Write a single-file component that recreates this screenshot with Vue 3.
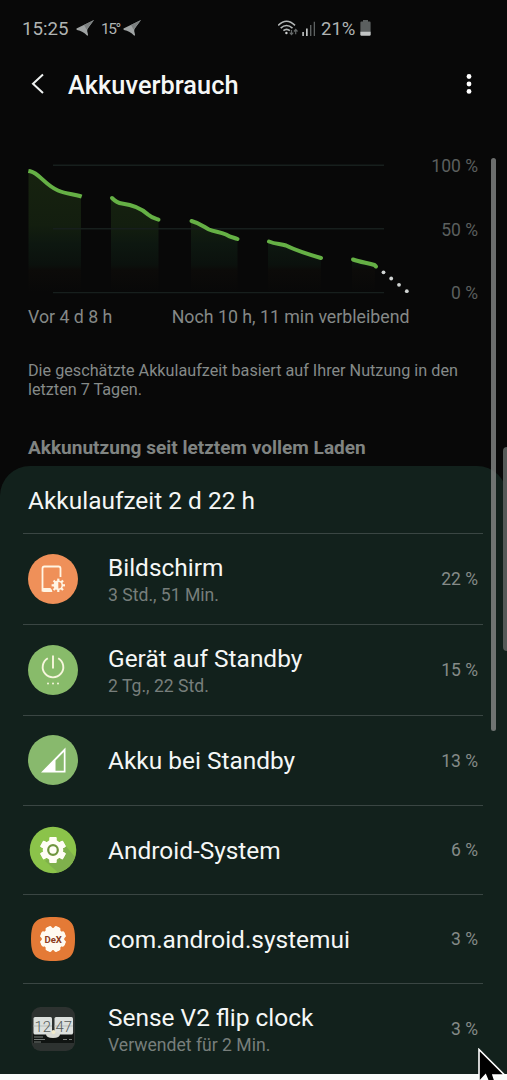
<script setup>
const rows = [
  { icon: 'screen', title: 'Bildschirm', sub: '3 Std., 51 Min.', pct: '22 %', size: 'r91' },
  { icon: 'power', title: 'Gerät auf Standby', sub: '2 Tg., 22 Std.', pct: '15 %', size: 'r91' },
  { icon: 'signal', title: 'Akku bei Standby', pct: '13 %', size: 'r90' },
  { icon: 'gear', title: 'Android-System', pct: '6 %', size: 'r89' },
  { icon: 'dex', title: 'com.android.systemui', pct: '3 %', size: 'r89' },
  { icon: 'clock', title: 'Sense V2 flip clock', sub: 'Verwendet für 2 Min.', pct: '3 %', size: 'r91' },
]
const teeth6 = [0, 60, 120, 180, 240, 300]
const teeth8 = [0, 45, 90, 135, 180, 225, 270, 315]
</script>

<template>
  <div class="phone">
    <header class="status">
      <span class="time">15:25</span>
      <svg class="plane p1" width="19" height="18" viewBox="0 0 19 18">
        <path d="M18 1 .5 9.600Q0 10.300 1 10.900Q7 12 11 16.500Q12.300 17 12 15.500Q10.500 12 11.500 10Z" fill="#a0a4a4" /><path d="M18 1 8 5.900 10.500 10.500Z" fill="#7c8080" />
      </svg>
      <span class="deg">15°</span>
      <svg class="plane p2" width="19" height="18" viewBox="0 0 19 18">
        <path d="M18 1 .5 9.600Q0 10.300 1 10.900Q7 12 11 16.500Q12.300 17 12 15.500Q10.500 12 11.500 10Z" fill="#a0a4a4" /><path d="M18 1 8 5.900 10.500 10.500Z" fill="#7c8080" />
      </svg>
      <svg class="wifi" width="21" height="17" viewBox="0 0 21 17" fill="none" stroke="#b4b8b8" stroke-width="1.600">
        <path d="M.2 5.400Q8.500-3 17 5.400M2.700 8.200Q8.500 2.800 14.500 8.200M5.400 10.700Q8.500 8 11.900 10.700" />
        <circle cx="8.400" cy="13" r="1.200" fill="#d0d3d3" stroke="none" />
        <path d="M13.500 10v4.200m-1.800-1.600 1.800 2 1.800-2M17.700 14.300V10m-1.800 1.500 1.800-2 1.800 2" stroke="#656969" stroke-width="1.200" />
      </svg>
      <svg class="bars" width="14" height="15" viewBox="0 0 14 15">
        <path d="M.3 11h1.600v4H.3zM4 7.500h1.700V15H4z" fill="#c0c4c4" /><path d="M8 4h1.400v11H8zM11.700.7H13V15h-1.300z" fill="#5d6161" />
      </svg>
      <span class="charge">21%</span>
      <svg class="batt" width="11" height="16" viewBox="0 0 11 16">
        <path d="M3 0h5v1.500h1.600q1 0 1 1V15H.4V2.500q0-1 1-1H3Z" fill="#5b5f5f" /><path d="M.4 11.700h10.200v3q0 1-1 1H1.400q-1 0-1-1Z" fill="#c2c5c5" />
      </svg>
    </header>

    <div class="appbar">
      <svg class="back" width="14" height="22" viewBox="0 0 14 22"><path d="M12 1.500 2 10.700 12 20" fill="none" stroke="#eef1f0" stroke-width="2" /></svg>
      <h1>Akkuverbrauch</h1>
      <svg class="more" width="6" height="22" viewBox="0 0 6 22" fill="#fff"><circle cx="3" cy="3.500" r="2.400" /><circle cx="3" cy="11" r="2.400" /><circle cx="3" cy="18.400" r="2.400" /></svg>
    </div>

    <section class="chart">
      <svg class="plot" width="400" height="150" viewBox="20 155 400 150">
        <defs>
          <linearGradient id="area" gradientUnits="userSpaceOnUse" x1="0" y1="165" x2="0" y2="293">
            <stop offset="0" stop-color="#17230f" /><stop offset=".47" stop-color="#131e0f" />
            <stop offset=".62" stop-color="#0d1710" /><stop offset=".78" stop-color="#0b110d" />
            <stop offset=".82" stop-color="#0c0b09" /><stop offset="1" stop-color="#080808" />
          </linearGradient>
        </defs>
        <g fill="url(#area)">
          <path d="M28.500 171C39 172 47 186 60 191L81 196V293H28.500Z" />
          <path d="M111 198Q116 203 122 204C134 206 142 210 149 216L158.500 220V293H111Z" />
          <path d="M191 221C202 224 205 229 211 231Q222 232 228 236L237.500 239V293H191Z" />
          <path d="M268 241 285 245Q296 251 321 258V293H268Z" />
          <path d="M352 260 375 265V293H352Z" />
        </g>
        <g stroke="#171f1d" stroke-width="1.400"><path d="M53 165.200H384M53 228.700H384M53 292.600H384" /></g>
        <g fill="none" stroke="#65b045" stroke-width="4" stroke-linecap="square" stroke-linejoin="round">
          <path d="M30.300 171.300C39 173 45 185 58 190.500C66 194 74 194 79.800 196" />
          <path d="M112 198C115 201 118 203 122 203.500C134 205 142 209 148 214.500C152 218 155 218.500 158.500 219.600" stroke-linecap="round" />
          <path d="M191.500 221C201 223.500 204 227 209 229.500C215 232 220 231.500 226 234.500C231 237.500 234 237.500 237.500 239" stroke-linecap="round" />
          <path d="M269 241.500C276 244.500 280 243.500 286 245.500C297 251 309 254.500 321 258" stroke-linecap="round" />
          <path d="M353 259.500C360 262 368 263 374.500 265L376 266.500" stroke-linecap="round" />
        </g>
        <g fill="#d0d4d3"><circle cx="383.500" cy="272.300" r="1.900" /><circle cx="391.200" cy="278.500" r="1.900" /><circle cx="399" cy="284.800" r="1.900" /><circle cx="406.800" cy="291.200" r="1.900" /></g>
      </svg>
      <div class="scale"><span>100 %</span><span>50 %</span><span>0 %</span></div>
    </section>
    <div class="range"><span class="ago">Vor 4 d 8 h</span><span class="left">Noch 10 h, 11 min verbleibend</span></div>

    <p class="note">Die geschätzte Akkulaufzeit basiert auf Ihrer Nutzung in den<br />letzten 7 Tagen.</p>
    <h2>Akkunutzung seit letztem vollem Laden</h2>

    <main class="card">
      <div class="life"><span>Akkulaufzeit 2 d 22 h</span></div>
      <div v-for="r in rows" :key="r.title" class="row" :class="[r.size, r.icon]">
        <svg class="icon" width="50" height="50" viewBox="0 0 50 50">
          <g v-if="r.icon === 'screen'">
            <circle cx="25" cy="25" r="25" fill="#ef9059" />
            <path d="M32.500 23V14.500Q32.500 12.500 30.500 12.500H16.500Q14.500 12.500 14.500 14.500V36.500H24" fill="none" stroke="#fff5e4" stroke-width="1.800" />
            <path d="M14 34H22.500L24.500 38H16Q14 38 14 36Z" fill="#fff5e4" />
            <g transform="translate(30.300 31.300)" fill="#fff5e4">
              <rect v-for="a in teeth8" :key="a" x="-1.100" y="-6.700" width="2.200" height="3" :transform="`rotate(${a})`" />
              <circle r="4.800" /><path d="M0-3.200A3.200 3.200 0 0 1 0 3.200Z" fill="#ef9059" />
            </g>
          </g>
          <g v-else-if="r.icon === 'power'">
            <circle cx="25" cy="25" r="25" fill="#88bb6a" />
            <path d="M19.800 13.200A10.300 10.300 0 1 0 30.200 13.200M25 10.500V23.500" fill="none" stroke="#f7f6dd" stroke-width="1.900" />
            <g fill="#f7f6dd"><circle cx="20" cy="38.500" r="1" /><circle cx="25" cy="38.500" r="1" /><circle cx="30" cy="38.500" r="1" /></g>
          </g>
          <g v-else-if="r.icon === 'signal'">
            <circle cx="25" cy="25" r="25" fill="#88b96d" />
            <path d="M37.500 12.500V37.500H13ZM35.800 17 27.500 25.500V35.800H35.800Z" fill="#fff" fill-rule="evenodd" />
          </g>
          <g v-else-if="r.icon === 'gear'">
            <circle cx="25" cy="25" r="23.300" fill="#8bc34a" />
            <path d="M17 36 36 19 47 32A23.300 23.300 0 0 1 30 47.500Z" fill="#7fb04c" />
            <rect v-for="a in teeth6" :key="a" x="21.500" y="12" width="7" height="26" rx="1" fill="#fffdf5" :transform="`rotate(${a} 25 25)`" />
            <circle cx="25" cy="25" r="10.300" fill="#fffdf5" /><circle cx="25" cy="25" r="4.800" fill="#fffdf5" stroke="#70953e" stroke-width="2.200" />
          </g>
          <g v-else-if="r.icon === 'dex'">
            <path d="M3 25C3 8 8 3 25 3S47 8 47 25 42 47 25 47 3 42 3 25Z" fill="#e47a36" />
            <rect v-for="a in teeth8" :key="a" x="21.800" y="12" width="6.400" height="26" rx="2" fill="#fffaf0" :transform="`rotate(${a + 22.5} 25 25)`" />
            <circle cx="25" cy="25" r="11.300" fill="#fffaf0" />
            <text x="25.200" y="28.600" text-anchor="middle" textLength="17.500" lengthAdjust="spacingAndGlyphs" class="dex-text">DeX</text>
          </g>
          <g v-else>
            <rect x="3.500" y="3" width="43.500" height="44" rx="9" fill="#2d3230" />
            <path d="M5 29H46V39H5Z" fill="#101412" />
            <rect x="5.500" y="13" width="18.500" height="17.500" rx="1.500" fill="#dce0dd" /><rect x="26.500" y="13" width="18.500" height="17.500" rx="1.500" fill="#dce0dd" />
            <path d="M5.500 22H24M26.500 22H45" stroke="#b7bdba" />
            <text x="6.500" y="27.500" textLength="16.500" lengthAdjust="spacingAndGlyphs" class="flip">12</text>
            <text x="27.500" y="27.500" textLength="16.500" lengthAdjust="spacingAndGlyphs" class="flip">47</text>
            <path d="M18 30Q20 27.500 25 27.500Q30 27.500 32 30Q32 34 25 34Q18 34 18 30Z" fill="#d9dbd4" /><circle cx="25.500" cy="28" r="2" fill="#f2ebcb" />
            <path d="M6 33H15M6 35.500H17M6 38H13M35 35.500H39M41 35.500H44" stroke="#777c79" stroke-width="1" />
          </g>
        </svg>
        <div class="texts"><div class="title"><span>{{ r.title }}</span></div><div v-if="r.sub" class="sub"><span>{{ r.sub }}</span></div></div>
        <span class="pct">{{ r.pct }}</span>
      </div>
    </main>
    <div class="foot"></div>
    <div class="scrollbar"></div>
    <div class="edge"></div>
    <svg class="cursor" width="30" height="34" viewBox="0 0 30 34"><path d="M2 1.500V34L8.500 27 14 40 19 36 16 27H27.500Z" fill="#000" stroke="#fff" stroke-width="1.600" /></svg>
  </div>
</template>

<style>
body { background: #080808; overflow: hidden; }
</style>
<style scoped>
.phone { position: relative; width: 507px; height: 1080px; overflow: hidden; background: #080808; font-family: Roboto, "Liberation Sans", sans-serif; color: #f5f7f6; display: flex; flex-direction: column; }
.phone > * { flex-shrink: 0; }
.status { height: 56px; display: flex; align-items: center; color: #b0b4b3; }
.time { width: 46px; margin: 2px 0 0 22px; font-size: 18.7px; white-space: nowrap; }
.plane { margin-left: 8px; }
.deg { width: 17px; margin: 1px 0 0 6px; font-size: 15.5px; letter-spacing: -1.4px; white-space: nowrap; }
.p2 { margin-left: 5px; }
.wifi { margin-left: 136px; }
.bars { margin-left: 3px; margin-top: 1px; }
.charge { margin: 2px 0 0 5px; width: 36px; font-size: 18.5px; }
.batt { margin-left: 3px; }
.appbar { height: 56px; display: flex; align-items: center; }
.back { margin-left: 31px; }
h1 { margin: 3px 0 0 23px; width: 172px; font-size: 25.3px; line-height: 30px; font-weight: 500; white-space: nowrap; letter-spacing: .06px; }
.more { margin-left: 225.5px; }
.chart { margin-top: 43px; height: 150px; display: flex; }
.plot { margin-left: 20px; }
.scale { width: 58px; height: 147px; padding-top: 1px; display: flex; flex-direction: column; justify-content: space-between; text-align: right; color: #5b5f5e; font-size: 17.5px; line-height: 20px; }
.range { height: 20px; margin: 2px 0 0 28px; width: 381.5px; display: flex; justify-content: space-between; font-size: 17.75px; line-height: 20px; color: #858987; white-space: nowrap; }
.note { margin: 34px 0 0 28px; font-size: 16.2px; line-height: 19px; color: #858a88; white-space: nowrap; }
h2 { margin: 38px 0 0 28px; font-size: 19.05px; line-height: 22px; font-weight: 700; color: #808482; white-space: nowrap; }
.card { margin-top: 7px; height: 608px; border-radius: 30px 30px 0 0; background: #12211c; }
.life { height: 67px; padding-left: 28px; font-size: 24.45px; line-height: 69px; }
.row { margin: 0 24px 0 23px; border-top: 1px solid #3a4643; box-sizing: border-box; display: flex; align-items: center; padding: 0 5px 1px; }
.r91 { height: 91px; }
.r90 { height: 90px; }
.r89 { height: 89px; }
.icon { flex-shrink: 0; }
.texts { margin-left: 30px; padding-top: 1px; flex: 1; white-space: nowrap; }
.r91 .texts { padding-top: 2px; }
.title { font-size: 24.45px; line-height: 29px; }
.sub { font-size: 17.6px; line-height: 24px; color: #777e7b; margin-top: 1px; }
.pct { font-size: 17.5px; color: #858b88; padding-top: 1px; }
.dex-text { font: bold 9.5px Roboto, sans-serif; fill: #8c3c20; }
.flip { font: 300 15px Roboto, sans-serif; fill: #565c59; }
.foot { height: 6px; background: #fafcfb; }
.scrollbar { position: absolute; left: 491px; top: 158px; width: 5px; height: 573px; border-radius: 3px; background: rgba(137, 140, 139, .78); }
.edge { position: absolute; left: 503px; top: 447px; width: 8px; height: 204px; border-radius: 4px; background: #555a58; }
.cursor { position: absolute; left: 477px; top: 1048px; }
</style>
